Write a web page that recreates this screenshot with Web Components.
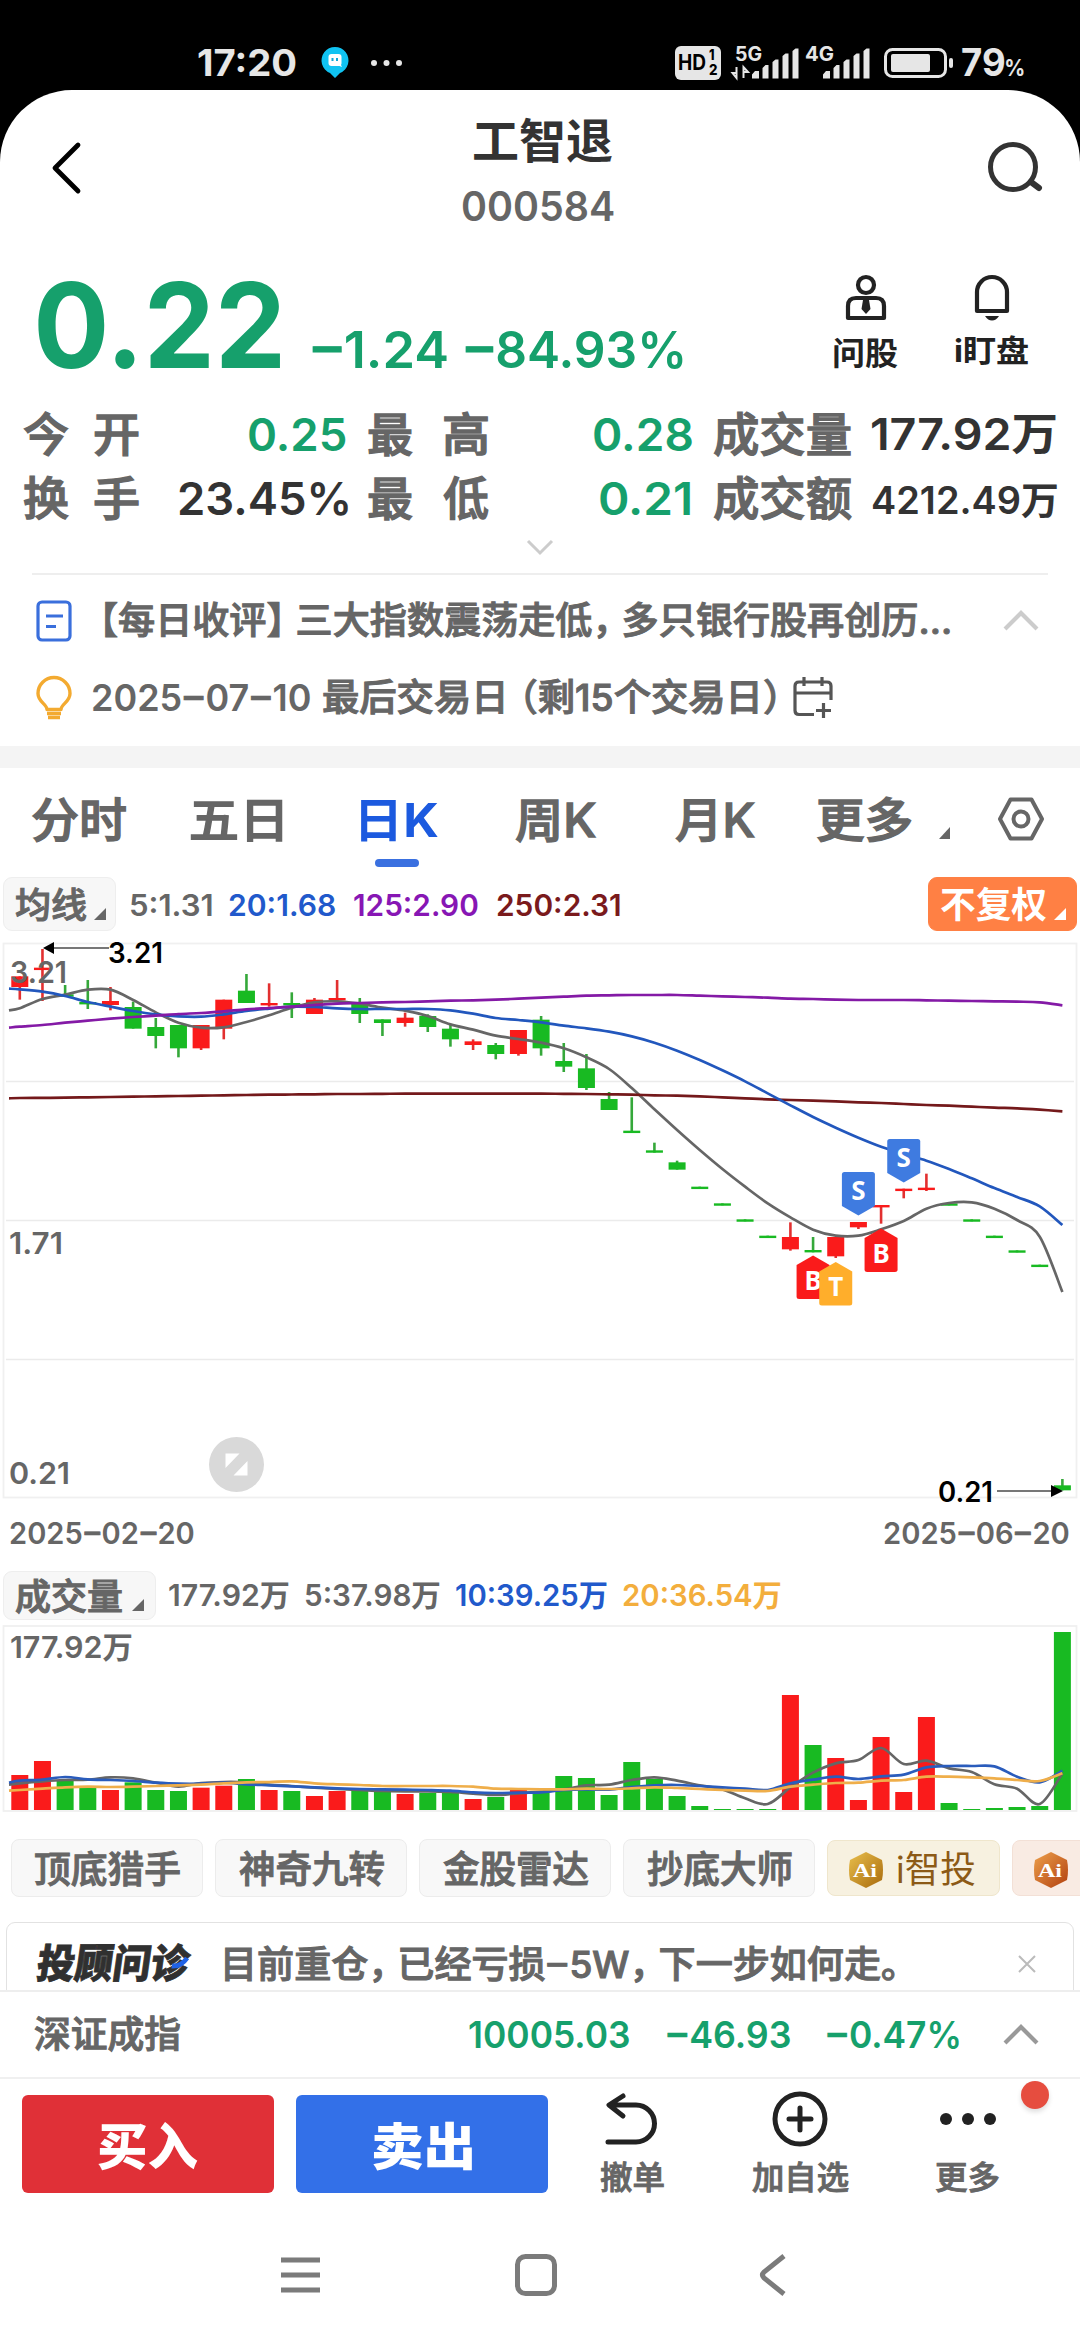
<!DOCTYPE html>
<html lang="zh-CN">
<head>
<meta charset="utf-8">
<title>工智退 000584</title>
<style>
html,body{margin:0;padding:0;background:#000}
body{width:1080px;height:2340px;overflow:hidden;font-family:Inter,"Noto Sans CJK SC",sans-serif;font-weight:500;color:#666}
</style>
</head>
<body>
<stock-app></stock-app>
<script>
const def = (name, css, html, setup) => {
  const tpl = document.createElement('template');
  tpl.innerHTML = `<style>:host{display:block;box-sizing:border-box}*{box-sizing:border-box}svg{display:block;flex:none;overflow:visible}${css}</style>${html}`;
  customElements.define(name, class extends HTMLElement {
    connectedCallback() {
      if (this.shadowRoot) return;
      this.attachShadow({mode: 'open'}).appendChild(tpl.content.cloneNode(true));
      if (setup) setup.call(this, this.shadowRoot);
    }
  });
};

/* Text whose painted width is set with w; size, weight, colour and left gap are attributes too.
   A <u> inside it marks a dash that is drawn long and at digit height. */
const pen = document.createElement('canvas').getContext('2d');
def('fit-text', `:host{display:block;flex:none;white-space:nowrap;line-height:1.3}
span{display:inline-block;transform-origin:0 50%;white-space:pre;text-spacing-trim:space-all}
::slotted(u){display:inline-block;text-decoration:none;font-feature-settings:"case";transform:scaleX(1.6);margin:0 .09em;-webkit-text-stroke:.02em}`, `<span><slot></slot></span>`, function (root) {
  const a = n => this.getAttribute(n);
  this.style.fontSize = a('s') + 'px';
  this.style.lineHeight = Math.round(a('s') * 1.3) + 'px';
  this.style.height = this.style.lineHeight;
  if (a('b')) this.style.fontWeight = a('b');
  if (a('c')) this.style.color = a('c');
  if (a('l')) this.style.marginLeft = a('l') + 'px';
  if (!a('b') && /[\u4e00-\u9fff]/.test(this.textContent)) this.style.webkitTextStroke = '0.028em';
  const w = +a('w'), span = root.querySelector('span');
  this.style.width = w + 'px';
  const cs = getComputedStyle(this);
  pen.font = `${cs.fontWeight} ${cs.fontSize} ${cs.fontFamily}`;
  const m = pen.measureText(this.textContent);
  const lb = -m.actualBoundingBoxLeft, rb = m.width - m.actualBoundingBoxRight;
  const full = span.getBoundingClientRect().width;
  const k = w / (full - lb - rb);
  span.style.transform = `translateX(${-lb * k}px) scaleX(${k})`;
});

def('status-bar', `:host{height:90px;background:#000;color:#e6e6e6;display:flex;align-items:center;padding-top:35px}
.hd{width:46px;height:34px;border-radius:6px;background:#e6e6e6;color:#000;display:flex;align-items:center;margin-left:272px;padding-left:4px;font-weight:700}
.hd div{display:flex;flex-direction:column;margin-left:3px}`,
`<fit-text s="37" w="98" l="198" b="700">17:20</fit-text>
<svg width="28" height="32" viewBox="0 0 28 32" style="margin-left:25px"><path d="M14 31 9 26A13.5 13.5 0 1 1 19 26Z" fill="#10c3f2"/><rect x="7.5" y="7" width="13" height="12" rx="3" fill="#fff"/><path d="M11.5 11v3M16 11v3" stroke="#10a8d8" stroke-width="2"/><path d="M16 18l5 2-2-4z" fill="#fff"/></svg>
<svg width="32" height="8" viewBox="0 0 32 8" style="margin-left:22px" fill="#e6e6e6"><circle cx="3" cy="4" r="3"/><circle cx="15.500" cy="4" r="3"/><circle cx="28" cy="4" r="3"/></svg>
<div class="hd"><fit-text s="21" w="27">HD</fit-text><div><fit-text s="15" w="5" b="800">1</fit-text><fit-text s="15" w="8" b="800" style="margin-top:-5px">2</fit-text></div></div>
<svg width="140" height="42" viewBox="731 41 140 42" style="margin-left:11px" fill="#e6e6e6">
<text x="734" y="59.500" font-size="20" font-weight="700" textLength="27" lengthAdjust="spacingAndGlyphs">5G</text>
<text x="804" y="59.500" font-size="20" font-weight="700" textLength="29" lengthAdjust="spacingAndGlyphs">4G</text>
<path d="M735.500 66v11l-4-5h4M742.500 77V66l4.500 5h-4.500" stroke="#e6e6e6" stroke-width="2" fill="none"/>
<path d="M751 77.500v-4l3-3.500h4v7.500zM761.500 77.500V67l3-3h3v13.500zM771.500 77.500V61l3-2.500h3v19zM781.500 77.500V55l3-2.500h3v25zM791.500 77.500V50l3-2.500h3v30z"/>
<path transform="translate(71 0)" d="M751 77.500v-4l3-3.500h4v7.500zM761.500 77.500V67l3-3h3v13.500zM771.500 77.500V61l3-2.500h3v19zM781.500 77.500V55l3-2.500h3v25zM791.500 77.500V50l3-2.500h3v30z"/></svg>
<svg width="70" height="30" viewBox="0 0 70 30" style="margin-left:12px"><rect x="1.500" y="1.500" width="60" height="27" rx="7" fill="none" stroke="#e6e6e6" stroke-width="3"/><rect x="7" y="6" width="39" height="18" rx="2" fill="#e6e6e6"/><rect x="65" y="10" width="4" height="10" rx="2" fill="#e6e6e6"/></svg>
<fit-text s="38" w="42" l="8" b="700">79</fit-text><fit-text s="23" w="18" l="2" b="700" style="margin-top:11px">%</fit-text>`);

def('app-header', `:host{height:160px;display:flex;background:#fff;border-radius:72px 72px 0 0}
.t{width:150px;margin-left:380px;display:flex;flex-direction:column;align-items:center}`,
`<svg width="34" height="56" viewBox="0 0 34 56" style="margin:50px 0 0 49px"><path d="M29 5 6 28 29 51" fill="none" stroke="#000" stroke-width="4.800" stroke-linecap="round" stroke-linejoin="round"/></svg>
<div class="t"><fit-text s="47" w="138" l="9" b="700" c="#333" style="margin-top:20px">工智退</fit-text><fit-text s="41" w="151" b="600" c="#666" style="margin-top:9px">000584</fit-text></div>
<svg width="60" height="56" viewBox="0 0 60 56" style="margin:49px 0 0 373px"><circle cx="27" cy="28" r="22.500" fill="none" stroke="#333" stroke-width="5"/><path d="M45 43l8 6" stroke="#333" stroke-width="6" stroke-linecap="round"/></svg>`);

def('quote-panel', `:host{height:152px;display:flex;background:#fff;color:#16a06c}
.a{width:66px;display:flex;flex-direction:column;align-items:center;padding-top:25px}.a svg{margin-bottom:12px}`,
`<fit-text s="118" w="242" l="38" b="700" style="margin-top:-1px">0.22</fit-text>
<fit-text s="51" w="134" l="33" b="600" style="margin-top:67px"><u>-</u>1.24</fit-text>
<fit-text s="51" w="217" l="19" b="600" style="margin-top:67px"><u>-</u>84.93%</fit-text>
<div class="a" style="margin-left:150px"><svg width="42" height="46" viewBox="0 0 42 46" fill="none" stroke="#222" stroke-width="4.200"><circle cx="21" cy="10" r="8"/><path d="M3 43V31Q3 23 11 23H31Q39 23 39 31V43Z" stroke-linejoin="round"/><path d="M18 25h6l1.500 9-4.500 5-4.500-5z" fill="#222" stroke="none"/></svg><fit-text s="32" w="64" b="700" c="#222">问股</fit-text></div>
<div class="a" style="margin-left:56px;width:73px"><svg width="36" height="46" viewBox="0 0 36 46" fill="none" stroke="#222" stroke-width="4.200"><path d="M3 36V17a15 15 0 0 1 30 0V36Z" stroke-linejoin="round"/><path d="M11 41h14q-3 4.500-7 4.500t-7-4.500z" fill="#222" stroke="none"/></svg><fit-text s="31" w="73" b="700" c="#222" style="margin-top:-2px">i盯盘</fit-text></div>`);

def('stat-grid', `:host{height:171px;background:#fff;color:#666}.r{height:64px;display:flex;align-items:center}`,
`<div class="r"><fit-text s="46" w="44" l="24">今</fit-text><fit-text s="46" w="43" l="27">开</fit-text><fit-text s="45" w="97" l="111" b="600" c="#16a06c">0.25</fit-text><fit-text s="46" w="43" l="23">最</fit-text><fit-text s="46" w="44" l="32">高</fit-text><fit-text s="45" w="98" l="106" b="600" c="#16a06c">0.28</fit-text><fit-text s="46" w="137" l="22">成交量</fit-text><fit-text s="44" w="184" l="21" b="600" c="#333">177.92万</fit-text></div>
<div class="r"><fit-text s="46" w="44" l="24">换</fit-text><fit-text s="46" w="43" l="27">手</fit-text><fit-text s="45" w="169" l="41" b="600" c="#333">23.45%</fit-text><fit-text s="46" w="43" l="21">最</fit-text><fit-text s="46" w="44" l="32">低</fit-text><fit-text s="45" w="90" l="112" b="600" c="#16a06c">0.21</fit-text><fit-text s="46" w="137" l="24">成交额</fit-text><fit-text s="38" w="185" l="21" b="600" c="#333" style="margin-top:4px">4212.49万</fit-text></div>
<svg width="28" height="18" viewBox="0 0 28 18" style="margin:9px 0 0 526px"><path d="M2 2l12 12L26 2" fill="none" stroke="#ccc" stroke-width="3"/></svg>`);

def('news-list', `:host{height:173px;background:#fff;padding-top:7px;border-top:2px solid #eee;border-image:linear-gradient(90deg,#fff 34px,#eee 34px,#eee 1046px,#fff 1046px) 2}
.r{height:77px;display:flex;align-items:center}i{font-style:normal;letter-spacing:-8px}`,
`<div class="r"><svg width="36" height="42" viewBox="0 0 36 42" style="margin-left:36px" fill="none" stroke="#3a6fdc" stroke-width="3.200"><rect x="2" y="2" width="32" height="38" rx="4"/><path d="M10 16h17M10 26.500h10"/></svg>
<fit-text s="37" w="845" l="33">【每日收评<i>】</i>三大指数震荡走低<i>，</i>多只银行股再创历...</fit-text>
<svg width="36" height="22" viewBox="0 0 36 22" style="margin-left:53px"><path d="M2 19 18 3l16 16" fill="none" stroke="#ccc" stroke-width="4.200"/></svg></div>
<div class="r"><svg width="38" height="44" viewBox="0 0 38 44" style="margin-left:35px" fill="none" stroke="#f3aa30" stroke-width="3.400"><path d="M12 33.500C12 28 3 26 3 17.500a16 16 0 0 1 32 0C35 26 26 28 26 33.500Z" stroke-linejoin="round"/><path d="M12 37.500h14M13 41.500h12"/></svg>
<fit-text s="37" w="217" l="20" b="600">2025<u>-</u>07<u>-</u>10</fit-text><fit-text s="37" w="452" l="13">最后交易<i>日</i>（剩15个交易日）</fit-text>
<svg width="42" height="44" viewBox="0 0 42 44" style="margin-left:17px" fill="none" stroke="#555" stroke-width="3.200"><path d="M22 38.500H7Q3 38.500 3 34.500V10Q3 6 7 6H35Q39 6 39 10V24M3 17H39M12 1V10M30 1V10M31.500 27V42M24 34.500H39"/></svg></div>`);

def('chart-tabs', `:host{height:124px;background:#fff;border-top:22px solid #f4f4f4;display:flex;align-items:center}
.on{position:relative}.on::after{content:"";position:absolute;left:14px;top:70px;width:44px;height:8px;border-radius:4px;background:#3a70e0}`,
`<fit-text s="47" w="94" l="32">分时</fit-text><fit-text s="47" w="91" l="65">五日</fit-text>
<div class="on" style="margin-left:79px"><fit-text s="47" w="77" b="700" c="#1c5adf">日K</fit-text></div>
<fit-text s="47" w="80" l="78">周K</fit-text><fit-text s="47" w="79" l="80">月K</fit-text><fit-text s="47" w="93" l="63">更多</fit-text>
<svg width="11" height="12" style="margin:28px 0 0 28px"><path d="M11 0V12H0Z" fill="#666"/></svg>
<svg width="48" height="44" viewBox="0 0 48 44" style="margin-left:47px" fill="none" stroke="#666" stroke-width="4"><path d="M13.500 2.500h21L45 22 34.500 41.500h-21L3 22Z" stroke-linejoin="round"/><circle cx="24" cy="22" r="7.500"/></svg>`);

def('menu-chip', `:host{display:flex;height:54px;border-radius:9px;background:#f7f7f7;border:1px solid #eee;align-items:center;flex:none}
:host([hot]){background:#ff8044;border-color:#ff8044}
svg{fill:#666;margin-top:20px}:host([hot]) svg{fill:#fff}`,
`<slot></slot><svg width="12" height="12"><path d="M12 0V12H0Z"/></svg>`);

def('ma-legend', `:host{height:70px;background:#fff;display:flex;align-items:center}menu-chip{margin-top:-3px}`,
`<menu-chip style="width:113px;margin-left:3px"><fit-text s="35" w="70" l="12" style="margin-right:8px;margin-top:3px">均线</fit-text></menu-chip>
<fit-text s="30" w="81" l="15" b="600" c="#666">5:1.31</fit-text><fit-text s="30" w="106" l="17" b="600" c="#2159cb">20:1.68</fit-text><fit-text s="30" w="124" l="19" b="600" c="#8716b4">125:2.90</fit-text><fit-text s="30" w="123" l="19" b="600" c="#7a1a1c">250:2.31</fit-text>
<menu-chip hot style="width:149px;margin-left:308px"><fit-text s="36" w="105" l="12" b="700" c="#fff" style="margin-right:8px;margin-top:3px">不复权</fit-text></menu-chip>`);

const RED = '#fa1b1b', GREEN = '#18ba22', X0 = 19.8, STEP = 22.665;
const cx = i => X0 + i * STEP;
/* Smooth path through one value per bar; lead is the value at the left frame edge. */
const curve = (vals, top, color, lead) => {
  const p = vals.map((v, i) => [cx(i), top + v / 3]);
  p.unshift([9, top + lead / 3]);
  let d = `M${p[0]}`;
  for (let i = 0; i < p.length - 1; i++) {
    const a = p[i - 1] || p[i], b = p[i], c = p[i + 1], e = p[i + 2] || c;
    d += `C${b[0] + (c[0] - a[0]) / 6} ${b[1] + (c[1] - a[1]) / 6} ${c[0] - (e[0] - b[0]) / 6} ${c[1] - (e[1] - b[1]) / 6} ${c[0]} ${c[1]}`;
  }
  return `<path d="${d}" fill="none" stroke="${color}" stroke-width="2.700"/>`;
};
const label = (x, y, len, txt, color, size) => `<text x="${x}" y="${y}" textLength="${len}" lengthAdjust="spacingAndGlyphs" font-size="${size}" font-weight="600" fill="${color}">${txt}</text>`;

def('k-chart', `:host{height:560px;background:#fff}`, ``, function (root) {
  const C = [
    [1,139,139,171,209],[1,57,113,120,213],[0,165,193,200,200],[0,150,216,222,237],[1,171,213,225,241],[0,215,231,296,296],[0,264,291,318,355],[0,285,285,355,382],
    [1,285,285,355,360],[1,209,209,296,328],[0,132,182,219,219],[1,160,219,225,230],[0,187,219,225,264],[1,204,209,252,252],[1,150,204,210,213],[0,204,221,252,279],
    [0,268,268,279,318],[1,248,263,279,290],[0,253,258,291,306],[0,285,296,328,350],[1,328,334,345,360],[0,339,345,372,388],[1,300,300,372,377],[0,258,269,355,377],
    [0,339,393,410,426],[0,372,415,474,480],[0,486,507,540,540],[0,502,602,608,608],[0,638,661,668,668],[0,692,697,719,719],[0,770,770,776,776],[0,820,820,826,826],
    [0,868,868,874,874],[0,917,917,923,923],[1,877,921,958,962],[0,921,960,967,967],[1,921,921,979,984],[1,876,876,892,897],[1,825,825,831,881],[1,776,776,782,805],
    [1,731,773,779,783],[0,820,820,826,826],[0,868,868,874,874],[0,917,917,923,923],[0,961,961,967,967],[0,1004,1004,1010,1010],[0,1647,1666,1681,1681]];
  const T = 930, y = v => T + v / 3;
  let s = `<svg width="1080" height="560" viewBox="0 940 1080 560"><g fill="none" stroke="#ebebeb"><rect x="3.500" y="943.500" width="1073" height="554" stroke-width="1.800" stroke="#f0f0f0"/><path d="M6 1081.500H1074M6 1220.500H1074M6 1359.500H1074" stroke-width="1.400"/></g>`;
  C.forEach(([r, h, t, b, l], i) => {
    const f = r ? RED : GREEN;
    s += `<path d="M${cx(i)} ${y(h)}V${y(l)}" stroke="${r ? '#e23030' : '#35a83a'}" stroke-width="2.600"/><rect x="${cx(i) - 8.5}" y="${y(t)}" width="17" height="${Math.max((b - t) / 3, 2.4)}" fill="${f}"/>`;
  });
  s += curve([235,207,194,179,179,210,247,278,293,292,276,256,233,217,214,221,233,242,258,283,299,317,327,338,355,382,417,474,538,600,660,717,770,820,862,899,917,917,898,873,836,819,817,836,870,920,1086], T, '#666', 241);
  s += curve([504,503.5,503,502,501,500,499,498,497,496,495,494,493.5,493,492,492,491.5,491,491,491,491,491,491,491,491.5,492,493,494,496,497,499,502,505,508,510,512,514,517,519,522,525,527,530,533,535,539,544], T, '#74191b', 505);
  s += curve([178,185,198,216,230,243,253,259,260,253,243,236,230,231,235,237,237,237,237,241,251,264,270,277,287,295,305,319,338,362,390,421,454,490,526,561,593,623,650,672,692,717,745,774,801,829,885], T, '#2257bd', 176);
  s += curve([290,285,278,272,266,261,257,252,249,244,238,234,230,225,221,219,217,216,214,212,211,209,206,203,200,197,196,195,195,195,197,199,201,203,206,207,209,210,210,210,211,212,213,214,215,217,226], T, '#841aa6', 293);
  const flag = (i, top, ch, color, down) => {
    const x = cx(i) - 16.5;
    return `<path transform="translate(${x} ${top})" d="${down ? 'M2.500 0H30.500Q33 0 33 2.500V34L16.500 43.500 0 34V2.500Q0 0 2.500 0Z' : 'M16.500 0 33 9.500V41Q33 43.500 30.500 43.500H2.500Q0 43.500 0 41V9.500Z'}" fill="${color}"/><text x="${cx(i)}" y="${top + (down ? 28 : 34)}" text-anchor="middle" font-family="Noto Sans" font-size="26" font-weight="700" fill="#fff">${ch}</text>`;
  };
  s += flag(35, 1255.5, 'B', RED) + flag(36, 1262, 'T', '#ffae2b') + flag(37, 1172, 'S', '#3f7be0', 1) + flag(38, 1228.5, 'B', RED) + flag(39, 1139, 'S', '#3f7be0', 1);
  s += label(10, 983, 57, '3.21', '#666', 30) + label(9, 1254, 54, '1.71', '#666', 30) + label(9, 1484, 61, '0.21', '#666', 30);
  s += `<path d="M53 948H109M997 1491H1054" stroke="#777" stroke-width="1.800"/><path d="M43 948l11-6v12zM1063 1491l-12-6v12z"/>`;
  s += label(108, 963, 55, '3.21', '#000', 28) + label(938, 1502, 55, '0.21', '#000', 28);
  s += `<circle cx="236.500" cy="1464.500" r="27.500" fill="#d9d9d9"/><path d="M225.500 1453.500H239.500L225.500 1468ZM247.500 1461V1475.500H233.500Z" fill="#fff"/></svg>`;
  root.innerHTML += s;
});

def('date-axis', `:host{height:66px;display:flex;align-items:center;justify-content:space-between;padding:0 11px 0 10px}`,
`<fit-text s="30" w="184" b="600">2025<u>-</u>02<u>-</u>20</fit-text><fit-text s="30" w="185" b="600">2025<u>-</u>06<u>-</u>20</fit-text>`);

def('vol-legend', `:host{height:58px;background:#fff;display:flex;align-items:center}menu-chip{height:49px}`,
`<menu-chip style="width:153px;margin-left:3px"><fit-text s="36" w="106" l="12" style="margin-right:10px;margin-top:4px">成交量</fit-text></menu-chip>
<fit-text s="30" w="120" l="13" b="600">177.92万</fit-text><fit-text s="30" w="134" l="17" b="600">5:37.98万</fit-text><fit-text s="30" w="151" l="16" b="600" c="#2159cb">10:39.25万</fit-text><fit-text s="30" w="158" l="16" b="600" c="#f3ae3d">20:36.54万</fit-text>`);

def('vol-chart', `:host{height:190px;background:#fff}`, ``, function (root) {
  const V = [675,633,690,713,720,697,720,723,713,707,687,720,723,738,723,723,726,732,729,726,747,741,720,729,678,684,735,636,687,738,768,777,777,777,435,585,624,750,561,726,501,759,777,774,771,768,246];
  const up = new Set([0,1,4,8,9,11,13,14,17,20,22,34,36,37,38,39,40]), T = 1550;
  let s = `<svg width="1080" height="190" viewBox="0 1624 1080 190"><rect x="3.500" y="1626" width="1073" height="185" fill="none" stroke="#f0f0f0" stroke-width="1.800"/>`;
  V.forEach((v, i) => { s += `<rect x="${cx(i) - 8.5}" y="${T + v / 3}" width="17" height="${(780 - v) / 3}" fill="${up.has(i) ? RED : GREEN}"/>`; });
  s += curve([700,694,690,689,682,685,698,710,699,696,697,704,708,713,717,720,723,724,724,726,731,735,730,725,718,706,704,690,682,692,706,718,745,762,712,668,640,630,594,642,632,655,666,703,716,762,670], T, '#666', 704);
  s += curve([692,689,681,688,690,693,698,701,701,698,703,706,709,712,715,717,718,719,720,722,727,729,728,727,720,718,719,711,706,705,708,712,716,720,700,689,680,687,679,674,652,648,648,649,680,697,662], T, '#2a5cbc', 698);
  s += curve([720,716,712,710,711,710,708,706,704,700,697,696,694,700,703,705,708,708,708,708,710,716,717,718,718,716,717,715,712,714,717,720,722,723,710,704,699,698,692,690,680,680,682,685,690,693,670], T, '#efae4a', 722);
  root.innerHTML += s + label(10, 1658, 123, '177.92万', '#666', 30) + '</svg>';
});

def('tool-chips', `:host{height:108px;background:#fff;display:flex;align-items:center;padding-left:11px;gap:12px;overflow:hidden}
.c{flex:none;width:192px;height:58px;border:1px solid #ececec;border-radius:8px;background:#f8f8f8;display:flex;align-items:center;justify-content:center;padding-top:3px}
.g{width:173px;height:56px;background:#f7f1e0;border-color:#efe6cc;justify-content:flex-start;padding-left:20px}
.o{background:#f9ebe3;border-color:#f3e0d6}text{font:700 19px "Liberation Serif";fill:#fff}`,
`<div class="c"><fit-text s="37" w="145">顶底猎手</fit-text></div><div class="c"><fit-text s="37" w="145">神奇九转</fit-text></div><div class="c"><fit-text s="37" w="145">金股雷达</fit-text></div><div class="c"><fit-text s="37" w="145">抄底大师</fit-text></div>
<div class="c g"><svg width="36" height="38" viewBox="0 0 36 38"><defs><linearGradient id="a" x2="1" y2="1"><stop stop-color="#e9bf4c"/><stop offset="1" stop-color="#a86a0c"/></linearGradient></defs><path d="M18 1 34 9Q36 19 34 29L18 37 2 29Q0 19 2 9Z" fill="url(#a)"/><text x="5" y="26" textLength="24" lengthAdjust="spacingAndGlyphs">Ai</text></svg><fit-text s="37" w="77" l="14" b="400" c="#8c5a16">i智投</fit-text></div>
<div class="c g o"><svg width="36" height="38" viewBox="0 0 36 38"><defs><linearGradient id="b" x2="1" y2="1"><stop stop-color="#eda04c"/><stop offset="1" stop-color="#b2400e"/></linearGradient></defs><path d="M18 1 34 9Q36 19 34 29L18 37 2 29Q0 19 2 9Z" fill="url(#b)"/><text x="5" y="26" textLength="24" lengthAdjust="spacingAndGlyphs">Ai</text></svg></div>`);

def('advisor-banner', `:host{height:68px;background:#fff;overflow:hidden;padding:0 6px}
.b{height:100px;border:1.500px solid #e2e2e2;border-radius:9px;display:flex;align-items:flex-start;padding-top:18px}i{font-style:normal;letter-spacing:-8px}
.l{position:relative;transform:skewX(-8deg);-webkit-text-stroke:.8px}.l svg{position:absolute;left:134px;top:15px}`,
`<div class="b"><div class="l" style="margin-left:30px"><fit-text s="40" w="160" b="900" c="#303030" style="margin-top:-3px">投顾问诊</fit-text><svg width="20" height="12"><path d="M1 10Q10 11 15 2" stroke="#1f62e6" stroke-width="5" fill="none"/></svg></div>
<fit-text s="37" w="669" l="28">目前重仓<i>，</i>已经亏损<u>-</u>5W<i>，</i>下一步如何走。</fit-text>
<svg width="18" height="18" viewBox="0 0 18 18" style="margin:14px 0 0 124px"><path d="M1 1l16 16M17 1 1 17" stroke="#bbb" stroke-width="2"/></svg></div>`);

def('index-bar', `:host{height:87px;background:#fff;display:flex;align-items:center;border-top:2px solid #eee;color:#16a06c}`,
`<fit-text s="37" w="145" l="35" c="#666">深证成指</fit-text><fit-text s="37" w="160" l="289" b="600">10005.03</fit-text><fit-text s="37" w="122" l="39" b="600"><u>-</u>46.93</fit-text><fit-text s="37" w="131" l="38" b="600"><u>-</u>0.47%</fit-text>
<svg width="36" height="22" viewBox="0 0 36 22" style="margin-left:44px"><path d="M2 19 18 3l16 16" fill="none" stroke="#999" stroke-width="4.200"/></svg>`);

def('trade-bar', `:host{height:148px;background:#fff;border-top:2px solid #f0f0f0;display:flex;padding-top:16px;position:relative}
.k{width:252px;height:98px;border-radius:6px;display:flex;align-items:center;justify-content:center;margin-left:22px;padding-top:6px}
.a{display:flex;flex-direction:column;align-items:center;justify-content:flex-end;height:107px;margin-top:-3px}
.d{position:absolute;left:1021px;top:2px;width:28px;height:28px;border-radius:50%;background:#e64d3f;box-shadow:0 3px 5px #0002}`,
`<div class="k" style="background:#e03037"><fit-text s="50" w="100" b="800" c="#fff">买入</fit-text></div>
<div class="k" style="background:#3370e8"><fit-text s="50" w="99" b="800" c="#fff">卖出</fit-text></div>
<div class="a" style="margin-left:52px;width:64px"><svg width="56" height="54" viewBox="0 0 56 54" style="margin:0 0 11px 0" fill="none" stroke="#222" stroke-width="5" stroke-linecap="round" stroke-linejoin="round"><path d="M19 4 5 13l14 11M6 13H32a18.500 18.500 0 0 1 0 37H4"/></svg><fit-text s="32" w="64">撤单</fit-text></div>
<div class="a" style="margin-left:88px;width:96px"><svg width="56" height="56" viewBox="0 0 56 56" style="margin-bottom:10px" fill="none" stroke="#222" stroke-width="5"><circle cx="28" cy="28" r="25"/><path d="M17 28H39M28 17V39" stroke-linecap="round"/></svg><fit-text s="32" w="96">加自选</fit-text></div>
<div class="a" style="margin-left:88px;width:63px"><svg width="56" height="12" viewBox="0 0 56 12" style="margin-bottom:32px" fill="#222"><circle cx="6" cy="6" r="6"/><circle cx="28" cy="6" r="6"/><circle cx="50" cy="6" r="6"/></svg><fit-text s="32" w="63">更多</fit-text></div>
<div class="d"></div>`);

def('nav-bar', `:host{height:115px;background:#fff;display:flex;align-items:center;padding-bottom:15px}svg{fill:none;stroke:#7b7b7b;stroke-width:5}`,
`<svg width="39" height="38" viewBox="0 0 39 38" style="margin-left:281px"><path d="M0 4H39M0 19H39M0 34H39"/></svg>
<svg width="42" height="42" viewBox="0 0 42 42" style="margin-left:195px"><rect x="2.500" y="2.500" width="37" height="37" rx="8"/></svg>
<svg width="28" height="42" viewBox="0 0 28 42" style="margin-left:202px"><path d="M25 2 5 18Q2 21 5 24L25 40"/></svg>`);

def('stock-app', `:host{width:1080px;height:2340px;overflow:hidden;background:linear-gradient(#000 200px,#fff 200px)}`,
`<status-bar></status-bar><app-header></app-header><quote-panel></quote-panel><stat-grid></stat-grid><news-list></news-list><chart-tabs></chart-tabs><ma-legend></ma-legend><k-chart></k-chart><date-axis></date-axis><vol-legend></vol-legend><vol-chart></vol-chart><tool-chips></tool-chips><advisor-banner></advisor-banner><index-bar></index-bar><trade-bar></trade-bar><nav-bar></nav-bar>`);
</script>
</body>
</html>
